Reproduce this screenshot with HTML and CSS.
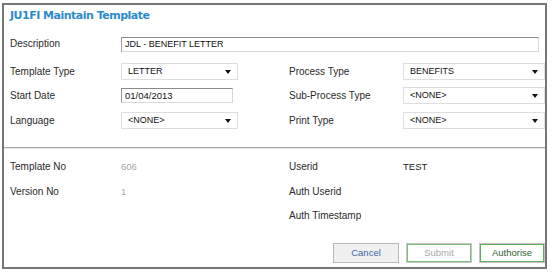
FILE: index.html
```html
<!DOCTYPE html>
<html lang="en">
<head>
    <meta charset="UTF-8">
    <title>JU1FI Maintain Template</title>
    <link rel="stylesheet" href="styles.css">
</head>
<body>
    <div class="panel">
        <h1 class="title">JU1FI Maintain Template</h1>

        <div class="form">
            <div class="lbl top">Description</div>
            <div class="field text desc">JDL - BENEFIT LETTER</div>

            <div class="lbl">Template Type</div>
            <div class="field sel">LETTER</div>
            <div></div>
            <div class="lbl">Process Type</div>
            <div class="field sel">BENEFITS</div>

            <div class="lbl">Start Date</div>
            <div class="field text date">01/04/2013</div>
            <div></div>
            <div class="lbl">Sub-Process Type</div>
            <div class="field sel">&lt;NONE&gt;</div>

            <div class="lbl">Language</div>
            <div class="field sel">&lt;NONE&gt;</div>
            <div></div>
            <div class="lbl">Print Type</div>
            <div class="field sel">&lt;NONE&gt;</div>
        </div>

        <div class="divider"></div>

        <div class="info">
            <div class="lbl">Template No</div>
            <div class="val dim">606</div>
            <div></div>
            <div class="lbl">Userid</div>
            <div class="val">TEST</div>

            <div class="lbl">Version No</div>
            <div class="val dim">1</div>
            <div></div>
            <div class="lbl">Auth Userid</div>
            <div class="val"></div>

            <div></div>
            <div></div>
            <div></div>
            <div class="lbl">Auth Timestamp</div>
            <div class="val"></div>
        </div>

        <div class="actions">
            <a href="#" class="btn cancel">Cancel</a>
            <a href="#" class="btn submit">Submit</a>
            <a href="#" class="btn auth">Authorise</a>
        </div>
    </div>
</body>
</html>
```

FILE: styles.css
```css
* {padding: 0; margin: 0; box-sizing: border-box;}
body {font-family: "Liberation Sans", Arial, sans-serif; font-size: 10px; color: #2a2a2a; background: #fff;}

.panel {width: 545px; height: 266px; margin: 3px 0 0 2px; border: 2px solid #767676;
    display: flex; flex-direction: column;}

.title {font-family: "DejaVu Sans", Verdana, sans-serif; font-size: 11px; font-weight: bold; color: #2b8bcb;
    line-height: 16px; padding: 3px 0 0 6px; letter-spacing: -0.5px;}

.form, .info {display: grid; padding-left: 6px;
    grid-template-columns: 111px 117px 51px 114px 142px; align-items: center;}
.form {margin-top: 13px; grid-template-rows: 18px 17px 17px 17px; row-gap: 7.5px;}
.form .lbl.top {align-self: start; line-height: 14px;}
.form .desc {grid-column: 2 / 6; margin-right: 6px; align-self: start;}

.field {height: 17px; line-height: 15px; padding: 0 6px; font-size: 9px; color: #111; background: #fff;}
.field.text {height: 15px; line-height: 13px; padding: 0 3px; border: 1px solid #d8d8d8;
    border-top-color: #8a8a8a; border-left-color: #9a9a9a;}
.field.date {width: 112px; font-size: 9.5px;}
.field.sel {position: relative; border: 1px solid #dedede;}
.field.sel::after {content: ""; position: absolute; right: 6px; top: 6px;
    border-left: 3px solid transparent; border-right: 3px solid transparent; border-top: 4px solid #111;}

.divider {margin-top: 18px; height: 2px; border-top: 1px solid #a9a9a9; border-bottom: 1px solid #e4e4e4;}

.info {margin-top: 6px; grid-auto-rows: 24.5px;}
.val {color: #222; font-size: 9.5px;}
.val.dim {color: #a4a4a4;}

.actions {margin-top: auto; display: flex; justify-content: flex-end; gap: 7px; padding: 0 0 4px;}
.btn {display: block; width: 66px; height: 20px; line-height: 18px; text-align: center; font-size: 9.5px;
    text-decoration: none; background: #fff; border: 1px solid #c4c4c4;}
.btn.cancel {background: #f0f0f0; color: #3c6aa8; border-color: #b9b9b9;}
.btn.submit {color: #a8a8a8; box-shadow: inset 0 0 0 1px #7cc07c;}
.btn.auth {color: #2f5f2f; box-shadow: inset 0 0 0 1px #5fae5f;}
```
